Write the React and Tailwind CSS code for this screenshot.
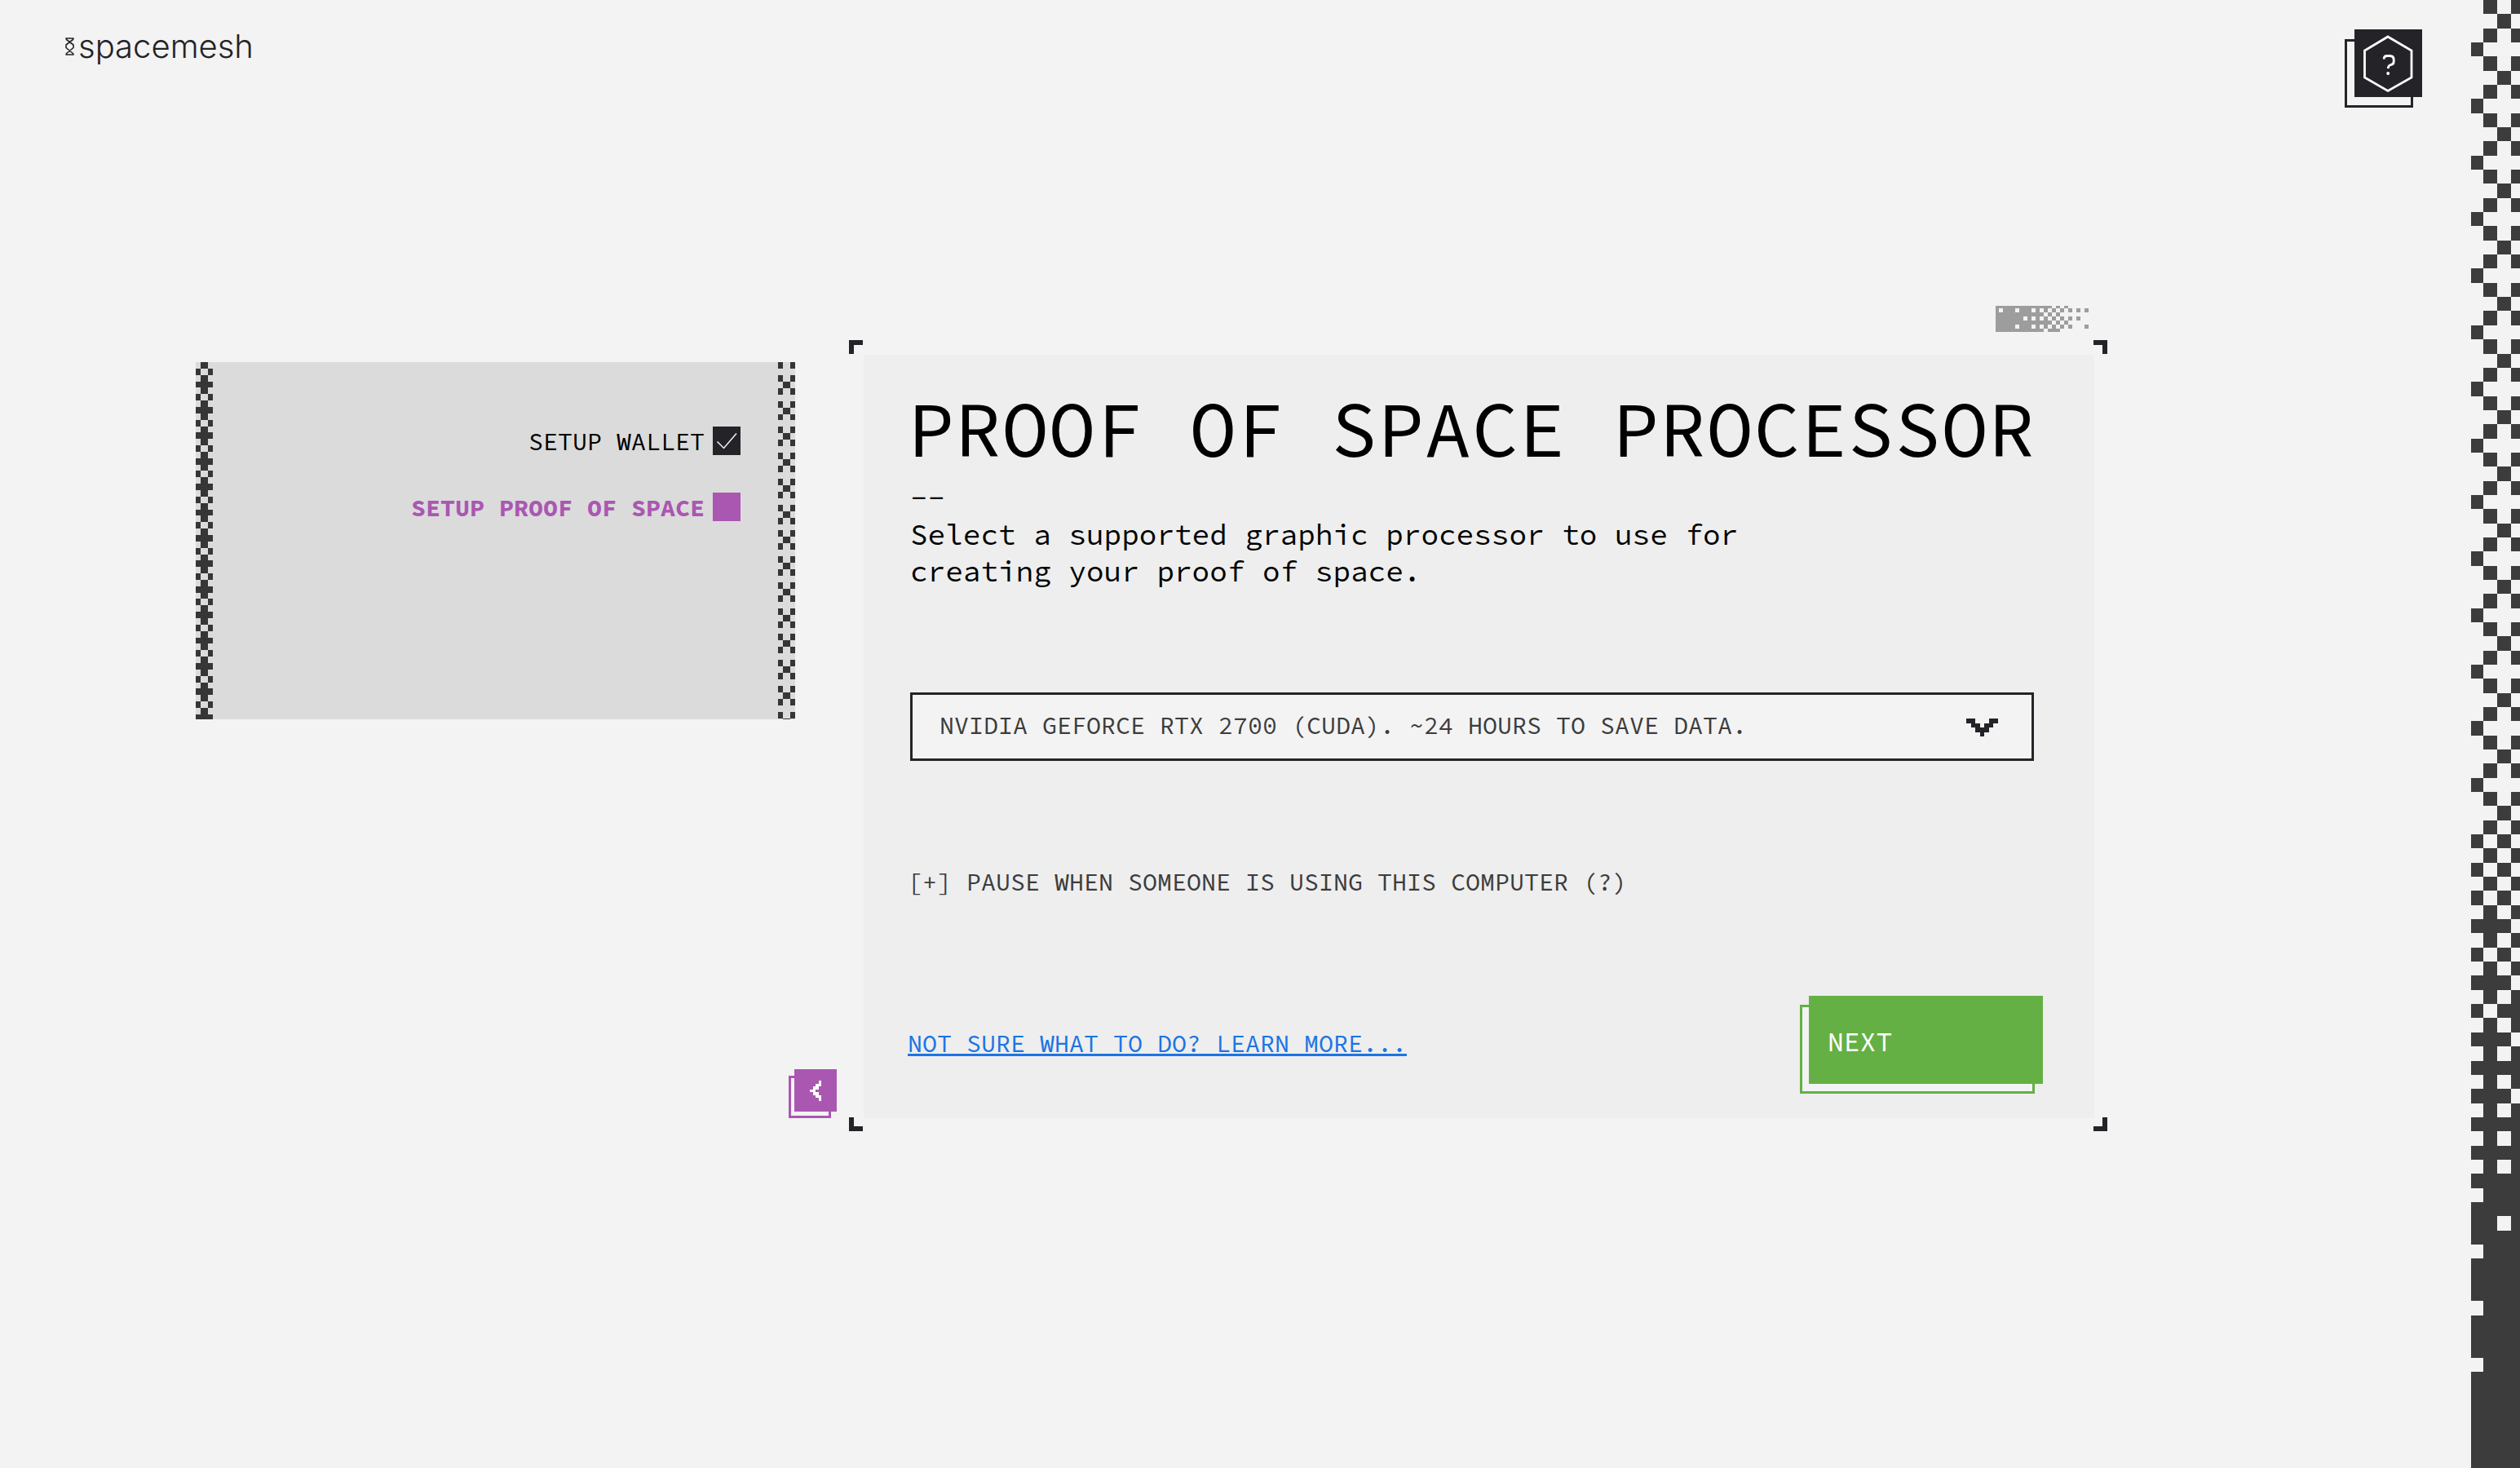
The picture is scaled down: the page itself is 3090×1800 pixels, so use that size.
import React from "react";

function Cells({ rows, xs, ys, fill }) {
  return (
    <g fill={fill} shapeRendering="crispEdges">
      {rows.flatMap((row, r) =>
        [...row].map((c, i) =>
          c === "#" ? (
            <rect key={r + "-" + i} x={xs[i]} y={ys[r]} width={xs[i + 1] - xs[i]} height={ys[r + 1] - ys[r]} />
          ) : null
        )
      )}
    </g>
  );
}

const steps = (count, size, start = 0) => Array.from({ length: count + 1 }, (_, i) => start + i * size);

/* Checkered edge: sparse lattice that thickens to solid towards the bottom. */
const EDGE_DENSE = {
  57: "..#.", 58: ".#.#", 59: "#.#.", 60: ".#.#", 61: "#.#.", 62: ".#.#", 63: "#.#.", 64: ".#.#",
  65: "###.", 66: ".#.#", 67: "#.#.", 68: ".#.#", 69: "###.", 70: ".#.#", 71: "#.##", 72: ".#.#",
  73: "###.", 74: ".#.#", 75: "####", 76: ".#.#", 77: "###.", 78: ".#.#", 79: "####", 80: ".#.#",
  81: "####", 82: ".#.#", 83: "####", 84: ".###", 86: "##.#", 88: ".###", 92: ".###", 96: ".###",
};
const EDGE_ROWS = Array.from({ length: 104 }, (_, n) => {
  if (n < 57) return [".#.#", "..#.", ".#.#", "#..."][n % 4];
  return EDGE_DENSE[n] || "####";
});

function PageEdge() {
  return (
    <aside className="w-[60px] shrink-0 self-stretch" aria-hidden="true">
      <svg className="block h-full w-full" viewBox="0 0 60 1800" preserveAspectRatio="none">
        <Cells rows={EDGE_ROWS} xs={[0, 14.5, 31.5, 48.5, 60]} ys={steps(104, 17.34)} fill="#3c3c3c" />
      </svg>
    </aside>
  );
}

function PanelEdge({ pattern, size, xs }) {
  const rows = Array.from({ length: 56 }, (_, n) => pattern[n % 4]);
  return (
    <svg className="block w-[21px] shrink-0 self-stretch" viewBox="0 0 21 438" preserveAspectRatio="none" aria-hidden="true">
      <Cells rows={rows} xs={xs} ys={steps(56, size)} fill="#363636" />
    </svg>
  );
}

const DITHER = [
  "##############.#.#.....",
  "#.###.###.#.#.#.#.#.#.#",
  "############.#.#.......",
  "#######.#.#.#.#.#.#.#..",
  "##############.#.#.....",
  "#####.###.#.#.#.#.#...#",
  "############.###.......",
];

function Dither() {
  return (
    <svg className="mr-[23px] block h-8 w-[114px]" viewBox="0 0 114 32" aria-hidden="true">
      <Cells rows={DITHER} xs={[0, ...steps(22, 5, 4)]} ys={[0, 3, 8, 13, 18, 23, 28, 32]} fill="#9d9d9d" />
    </svg>
  );
}

function Logo() {
  return (
    <a href="#home" className="flex items-center gap-1 text-[#242328]">
      <svg className="h-[22px] w-3" viewBox="0 0 12 22" fill="none" stroke="currentColor" strokeWidth="1.6" strokeLinejoin="round" aria-hidden="true">
        <path d="M1 1H10L9.500 2.500L1 9V12.500L9.500 19.500L10 21H1L1.500 19.500L10 12.500V9L1.500 2.500Z" />
      </svg>
      <span className="font-['Inter',sans-serif] text-[40px] leading-[42px] font-light">spacemesh</span>
    </a>
  );
}

function HelpButton() {
  return (
    <button type="button" aria-label="Help" className="relative h-24 w-[95px]">
      <span className="absolute bottom-0 left-0 h-[84px] w-[84px] border-[3px] border-[#242328]" />
      <span className="absolute top-0 right-0 flex h-[83px] w-[83px] items-center justify-center bg-[#242328]">
        <svg className="h-[83px] w-[83px]" viewBox="0 0 83 83" fill="none" stroke="#fff" strokeWidth="2.800" aria-hidden="true">
          <path d="M41 9L70 26V59L41 75.500L12.500 59V26Z" />
          <path d="M36.200 36.500C36.200 33.500 38 32.500 40 32.500H43.500C46.500 32.500 48.200 34.500 48.200 37.500V39.500C48.200 42.500 46.500 43.200 44.500 43.500C42 44 41.300 45.500 41.300 48" />
          <circle cx="41.200" cy="54" r="2" fill="#fff" stroke="none" />
        </svg>
      </span>
    </button>
  );
}

function Steps() {
  return (
    <nav aria-label="Setup steps" className="mt-[69px] flex h-[438px] w-[735px] shrink-0 bg-[#dbdbdb]">
      <PanelEdge pattern={[".#.", "#.#", ".#.", "###"]} size={7.85} xs={[0, 6, 15, 21]} />
      <ol className="flex flex-1 flex-col items-end gap-[46px] pt-[79px] pr-[46px] text-[30px] leading-[37px] text-black">
        <li className="flex h-[35px] gap-[10px]">
          <span>SETUP WALLET</span>
          <svg className="h-[35px] w-[34px] bg-[#242328]" viewBox="0 0 34 35" fill="none" stroke="#f3f3f3" strokeWidth="1.500" aria-hidden="true">
            <path d="M5.500 18.500L13.500 26.500L29 8.500" />
          </svg>
        </li>
        <li className="flex h-[35px] gap-[10px] font-bold text-[#aa57b2]" aria-current="step">
          <span>SETUP PROOF OF SPACE</span>
          <span className="h-[35px] w-[34px] bg-[#aa57b2]" />
        </li>
      </ol>
      <PanelEdge pattern={["#.#", "...", "#.#", ".#."]} size={7.94} xs={[0, 6, 15, 21]} />
    </nav>
  );
}

function BackButton() {
  return (
    <button type="button" aria-label="Back" className="absolute bottom-4 -left-[74px] h-[60px] w-[59px]">
      <span className="absolute bottom-0 left-0 h-[52px] w-[52px] border-[3px] border-[#aa57b2]" />
      <span className="absolute top-0 right-0 flex h-[52px] w-[52px] items-center justify-center bg-[#aa57b2]">
        <svg className="h-[25px] w-[14px]" viewBox="0 0 4 7" preserveAspectRatio="none" aria-hidden="true">
          <Cells rows={["...#", "..##", ".##.", "##..", ".##.", "..##", "...#"]} xs={steps(4, 1)} ys={steps(7, 1)} fill="#fff" />
        </svg>
      </span>
    </button>
  );
}

function Corners() {
  return (
    <>
      <span className="absolute top-0 left-0 h-[17px] w-[17px] border-t-6 border-l-6 border-[#242328]" />
      <span className="absolute top-0 right-0 h-[17px] w-[17px] border-t-6 border-r-6 border-[#242328]" />
      <span className="absolute bottom-0 left-0 h-[17px] w-[17px] border-b-6 border-l-6 border-[#242328]" />
      <span className="absolute right-0 bottom-0 h-[17px] w-[17px] border-r-6 border-b-6 border-[#242328]" />
    </>
  );
}

function ProcessorSelect() {
  return (
    <div className="relative mt-[126px] mr-[11px] ml-[3px]">
      <select aria-label="Graphic processor" className="block h-[84px] w-full appearance-none rounded-none border-3 border-[#242328] bg-[#f3f3f3] pr-24 pb-1 pl-[33px] text-[30px] leading-[40px] text-[#3c3c3c]">
        <option>NVIDIA GEFORCE RTX 2700 (CUDA). ~24 HOURS TO SAVE DATA.</option>
      </select>
      <svg className="pointer-events-none absolute top-[32px] right-[44px] h-[22px] w-[39px]" viewBox="0 0 7 4" preserveAspectRatio="none" aria-hidden="true">
        <Cells rows={["##...##", ".##.##.", "..###..", "...#..."]} xs={steps(7, 1)} ys={steps(4, 1)} fill="#242328" />
      </svg>
    </div>
  );
}

function NextButton() {
  return (
    <button type="button" className="relative h-[120px] w-[298px] text-[33px] leading-[42px] text-white">
      <span className="absolute bottom-0 left-0 h-[109px] w-[288px] border-3 border-[#65b045] bg-[#f3f3f3]" />
      <span className="absolute top-0 right-0 flex h-[108px] w-[287px] items-center bg-[#65b045] pt-1.5 pl-[23px]">NEXT</span>
    </button>
  );
}

export default function App() {
  return (
    <div className="flex min-h-screen bg-[#f3f3f3] font-['Source_Code_Pro','Liberation_Mono',monospace]">
      <div className="flex flex-1 flex-col">
        <header className="flex items-start justify-between pt-9 pr-[60px] pl-20">
          <Logo />
          <HelpButton />
        </header>
        <div className="mt-[243px] flex items-start gap-[66px] pr-[446px] pl-60">
          <Steps />
          <div className="flex flex-1 flex-col items-end gap-[10px]">
            <Dither />
            <div className="relative w-full pt-[18px] pr-4 pb-4 pl-[18px]">
              <Corners />
              <main className="bg-[#eee] pt-[43px] pr-[63px] pb-[30px] pl-[54px] text-black">
                <h1 className="text-[96px] leading-[96px] whitespace-nowrap">PROOF OF SPACE PROCESSOR</h1>
                <div className="mt-[14px] ml-[3px] max-w-[1080px] text-[36px] leading-[45px]">
                  <p>--</p>
                  <p>Select a supported graphic processor to use for creating your proof of space.</p>
                </div>
                <ProcessorSelect />
                <div className="mt-[128px] text-[30px] leading-[40px] text-[#3c3c3c]">
                  <button type="button">[+] PAUSE WHEN SOMEONE IS USING THIS COMPUTER (?)</button>
                </div>
                <div className="mt-[120px] flex items-center justify-between">
                  <a href="#learn-more" className="pb-1 text-[30px] leading-[40px] text-[#1a75e4] underline">NOT SURE WHAT TO DO? LEARN MORE...</a>
                  <NextButton />
                </div>
              </main>
              <BackButton />
            </div>
          </div>
        </div>
      </div>
      <PageEdge />
    </div>
  );
}
